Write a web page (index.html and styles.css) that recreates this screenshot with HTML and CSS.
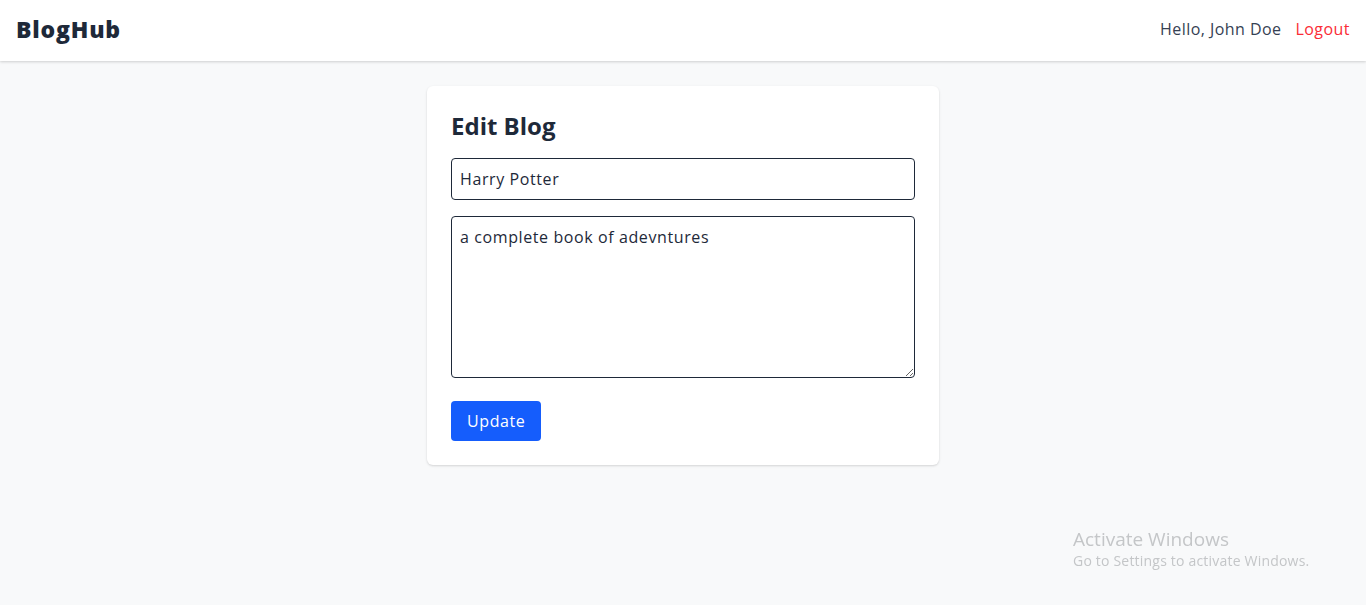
FILE: index.html
```html
<!DOCTYPE html>
<html lang="en">
<head>
<meta charset="utf-8">
<title>BlogHub - Edit Blog</title>
<link rel="stylesheet" href="styles.css">
</head>
<body>
<header class="navbar">
  <div class="brand">BlogHub</div>
  <div class="nav-right">
    <span class="greeting">Hello, John Doe</span>
    <a class="logout" href="#">Logout</a>
  </div>
</header>
<main class="main">
  <section class="card">
    <h1 class="card-title">Edit Blog</h1>
    <form class="form">
      <input class="field" type="text" value="Harry Potter">
      <textarea class="field area" rows="6">a complete book of adevntures</textarea>
      <div class="actions"><button class="btn" type="button">Update</button></div>
    </form>
  </section>
</main>
<div class="watermark">
  <div class="wm-title">Activate Windows</div>
  <div class="wm-sub">Go to Settings to activate Windows.</div>
</div>
</body>
</html>
```

FILE: styles.css
```css
* { box-sizing: border-box; }
html, body { margin: 0; padding: 0; }
body {
  font-family: "Open Sans", "Noto Sans", sans-serif;
  background: #f8f9fa;
  color: #1e2939;
  min-height: 605px;
}
.navbar {
  height: 61px;
  background: #ffffff;
  box-shadow: 0 1px 3px rgba(0,0,0,0.12), 0 1px 2px rgba(0,0,0,0.06);
  display: flex;
  align-items: center;
  justify-content: space-between;
  padding: 0 16px 4px;
  position: relative;
}
.brand {
  font-size: 23px;
  font-weight: 800;
  color: #1e2939;
  letter-spacing: 0.8px;
}
.nav-right {
  display: flex;
  align-items: center;
  gap: 14px;
  font-size: 16px;
  letter-spacing: 0.45px;
}
.greeting { color: #364153; }
.logout { color: #fb2c36; text-decoration: none; }
.main {
  display: flex;
  justify-content: center;
  padding-top: 25px;
}
.card {
  width: 512px;
  background: #ffffff;
  border-radius: 6px;
  box-shadow: 0 1px 3px rgba(0,0,0,0.1), 0 1px 2px rgba(0,0,0,0.06);
  padding: 24px;
}
.card-title {
  margin: 0 0 16px;
  font-size: 24px;
  line-height: 32px;
  font-weight: 700;
  color: #1e2939;
}
.form { display: flex; flex-direction: column; }
.field {
  display: block;
  width: 100%;
  font-family: inherit;
  font-size: 16px;
  line-height: 24px;
  letter-spacing: 0.6px;
  color: #1e2939;
  padding: 8px;
  border: 1px solid #1e2939;
  border-radius: 4px;
  background: #fff;
  margin: 0 0 16px;
  outline: none;
}
.area { height: 162px; resize: vertical; margin-bottom: 23px; }
.actions { display: flex; }
.btn {
  font-family: inherit;
  font-size: 16px;
  line-height: 24px;
  letter-spacing: 0.6px;
  padding: 8px 16px;
  background: #155dfc;
  color: #fff;
  border: none;
  border-radius: 4px;
  cursor: pointer;
}
.watermark {
  position: fixed;
  left: 1073px;
  top: 528px;
  color: #c4c6c8;
  font-family: "Open Sans", "Noto Sans", sans-serif;
}
.wm-title { font-size: 19px; line-height: 22px; }
.wm-sub { font-size: 14px; line-height: 22px; letter-spacing: 0.2px; }
```
